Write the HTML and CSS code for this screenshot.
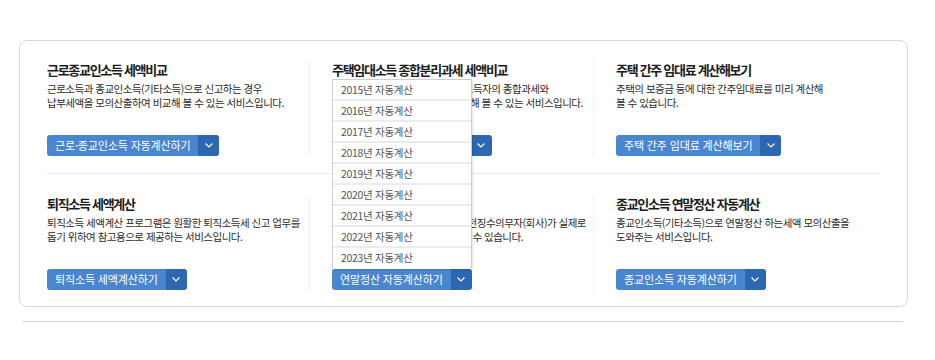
FILE: index.html
```html
<!DOCTYPE html>
<html lang="ko">
<head>
	<meta charset="UTF-8">
	<title>세액계산 서비스</title>
	<link rel="stylesheet" href="styles.css">
</head>
<body>
	<div class="page">
		<div class="card">
			<div class="row">
				<div class="col">
					<h3 class="tit">근로종교인소득 세액비교</h3>
					<p class="desc">근로소득과 종교인소득(기타소득)으로 신고하는 경우<br>납부세액을 모의산출하여 비교해 볼 수 있는 서비스입니다.</p>
					<div class="btn-group">
						<a href="javascript:;" class="btn">근로·종교인소득 자동계산하기</a>
						<a href="javascript:;" class="btn-arrow"><svg width="8" height="5" viewBox="0 0 8 5"><polyline points="0.5,0.5 4,4 7.5,0.5" fill="none" stroke="#fff" stroke-width="1.2"/></svg></a>
					</div>
				</div>
				<div class="col">
					<h3 class="tit">주택임대소득 종합분리과세 세액비교</h3>
					<p class="desc">수입금액 2천만원 이하 주택임대소득자의 종합과세와<br>분리과세 시 예상 납부세액을 비교해 볼 수 있는 서비스입니다.</p>
					<div class="btn-group">
						<a href="javascript:;" class="btn">주택임대소득 세액비교하기</a>
						<a href="javascript:;" class="btn-arrow"><svg width="8" height="5" viewBox="0 0 8 5"><polyline points="0.5,0.5 4,4 7.5,0.5" fill="none" stroke="#fff" stroke-width="1.2"/></svg></a>
					</div>
				</div>
				<div class="col">
					<h3 class="tit">주택 간주 임대료 계산해보기</h3>
					<p class="desc">주택의 보증금 등에 대한 간주임대료를 미리 계산해<br>볼 수 있습니다.</p>
					<div class="btn-group">
						<a href="javascript:;" class="btn">주택 간주 임대료 계산해보기</a>
						<a href="javascript:;" class="btn-arrow"><svg width="8" height="5" viewBox="0 0 8 5"><polyline points="0.5,0.5 4,4 7.5,0.5" fill="none" stroke="#fff" stroke-width="1.2"/></svg></a>
					</div>
				</div>
			</div>
			<div class="row">
				<div class="col">
					<h3 class="tit">퇴직소득 세액계산</h3>
					<p class="desc">퇴직소득 세액계산 프로그램은 원활한 퇴직소득세 신고 업무를<br>돕기 위하여 참고용으로 제공하는 서비스입니다.</p>
					<div class="btn-group">
						<a href="javascript:;" class="btn">퇴직소득 세액계산하기</a>
						<a href="javascript:;" class="btn-arrow"><svg width="8" height="5" viewBox="0 0 8 5"><polyline points="0.5,0.5 4,4 7.5,0.5" fill="none" stroke="#fff" stroke-width="1.2"/></svg></a>
					</div>
				</div>
				<div class="col">
					<h3 class="tit">근로소득 연말정산 자동계산</h3>
					<p class="desc">근로자의 연말정산 결정세액을 원천징수의무자(회사)가 실제로<br>연말정산하기 전에 미리 계산해 볼 수 있습니다.</p>
					<div class="btn-group">
						<a href="javascript:;" class="btn">연말정산 자동계산하기</a>
						<a href="javascript:;" class="btn-arrow"><svg width="8" height="5" viewBox="0 0 8 5"><polyline points="0.5,0.5 4,4 7.5,0.5" fill="none" stroke="#fff" stroke-width="1.2"/></svg></a>
						<ul class="dropdown">
							<li><a href="javascript:;">2015년 자동계산</a></li>
							<li><a href="javascript:;">2016년 자동계산</a></li>
							<li><a href="javascript:;">2017년 자동계산</a></li>
							<li><a href="javascript:;">2018년 자동계산</a></li>
							<li><a href="javascript:;">2019년 자동계산</a></li>
							<li><a href="javascript:;">2020년 자동계산</a></li>
							<li><a href="javascript:;">2021년 자동계산</a></li>
							<li><a href="javascript:;">2022년 자동계산</a></li>
							<li><a href="javascript:;">2023년 자동계산</a></li>
						</ul>
					</div>
				</div>
				<div class="col">
					<h3 class="tit">종교인소득 연말정산 자동계산</h3>
					<p class="desc">종교인소득(기타소득)으로 연말정산 하는세액 모의산출을<br>도와주는 서비스입니다.</p>
					<div class="btn-group">
						<a href="javascript:;" class="btn">종교인소득 자동계산하기</a>
						<a href="javascript:;" class="btn-arrow"><svg width="8" height="5" viewBox="0 0 8 5"><polyline points="0.5,0.5 4,4 7.5,0.5" fill="none" stroke="#fff" stroke-width="1.2"/></svg></a>
					</div>
				</div>
			</div>
		</div>
		<div class="bottom-line"></div>
	</div>
</body>
</html>
```

FILE: styles.css
```css
* {
	box-sizing: border-box;
}
body {
	margin: 0;
	background: #fff;
	font-family: "Noto Sans CJK KR", "Noto Sans", sans-serif;
	color: #333;
}
.page {
	padding: 40px 0 0 19px;
}
.card {
	width: 889px;
	border: 1px solid #d3dae2;
	border-radius: 8px;
	padding: 0 27px;
}
.row {
	display: grid;
	grid-template-columns: 262px 284px 1fr;
	padding: 21px 0 17px;
	border-bottom: 1px solid #ebebeb;
}
.row:last-child {
	padding: 22px 0 16px;
	border-bottom: 0;
}
.col {
	display: flex;
	flex-direction: column;
	align-items: flex-start;
	height: 94px;
}
.col + .col {
	border-left: 1px solid #eeeeee;
	padding-left: 22px;
}
.tit {
	margin: 0 0 4px;
	font-size: 13px;
	line-height: 16px;
	font-weight: bold;
	letter-spacing: -1.3px;
	color: #1b1b1b;
}
.desc {
	margin: 0;
	font-size: 10.5px;
	line-height: 14px;
	letter-spacing: -0.5px;
	white-space: nowrap;
	color: #2b2b2b;
}
.btn-group {
	position: relative;
	display: flex;
	margin-top: auto;
	height: 21px;
	border-radius: 3px;
}
.btn {
	display: block;
	padding: 0 8px;
	line-height: 21px;
	font-size: 11px;
	letter-spacing: -0.15px;
	color: #fff;
	text-decoration: none;
	background: #4a86cf;
	border-radius: 3px 0 0 3px;
}
.btn-arrow {
	display: flex;
	align-items: center;
	justify-content: center;
	width: 21px;
	background: #2d66b1;
	border-radius: 0 3px 3px 0;
}
.dropdown {
	position: absolute;
	left: 0;
	right: 0;
	bottom: 100%;
	margin: 0;
	padding: 0;
	list-style: none;
	background: #fff;
	border: 1px solid #cfcfcf;
	border-bottom: 0;
	box-shadow: 1px 1px 2px rgba(0,0,0,.12);
}
.dropdown li {
	height: 21px;
	border-bottom: 2px solid #ececec;
}
.dropdown li:last-child {
	border-bottom: 0;
}
.dropdown a {
	display: block;
	padding-left: 8px;
	line-height: 19px;
	font-size: 10.5px;
	letter-spacing: -0.3px;
	color: #555;
	text-decoration: none;
}
.bottom-line {
	width: 880px;
	margin: 14px 0 0 4px;
	border-top: 1px solid #c9d1da;
}
```
